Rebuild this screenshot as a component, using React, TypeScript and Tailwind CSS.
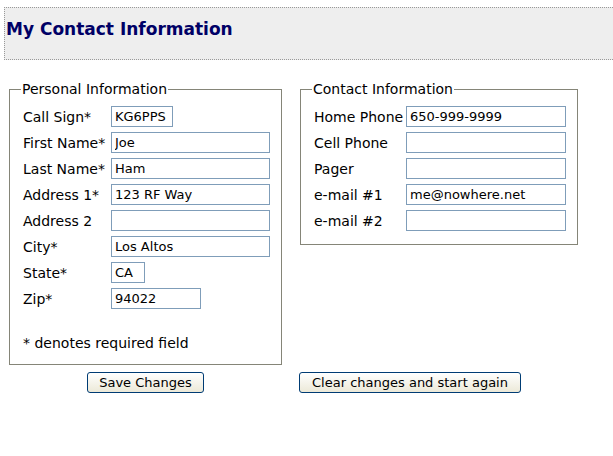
import React from "react";

const font = { fontFamily: '"DejaVu Sans", Verdana, sans-serif' };

function Row({ label, value, w, labelW }: { label: string; value: string; w: string; labelW: string }) {
  return (
    <div className="flex items-center h-[21px]">
      <div className={`${labelW} shrink-0 text-[14px] text-black leading-none whitespace-nowrap`}>{label}</div>
      <input
        readOnly
        value={value}
        className={`${w} h-[21px] border border-[#7f9db9] bg-white px-[3px] text-[13px] text-black outline-none`}
        style={font}
      />
    </div>
  );
}

export default function App() {
  return (
    <div className="w-[613px] h-[456px] bg-white overflow-hidden" style={font}>
      <div className="mt-[7px] ml-[4px] h-[53px] border-t border-b border-l border-dotted border-[#999] bg-[#eeeeee] flex items-center pl-[1px]">
        <h1 className="text-[17px] font-bold text-[#000066] leading-none -mt-[8px]">My Contact Information</h1>
      </div>
      <div className="flex mt-[22px] ml-[9px] gap-[18px] items-start">
        <fieldset className="w-[273px] border border-[#858578] pl-[13px] pr-[11px] pt-[10px] pb-[14px]">
          <legend className="text-[14px] px-[1px] -ml-[2px] text-black leading-none">Personal Information</legend>
          <div className="flex flex-col gap-[5px]">
            <Row label="Call Sign*" value="KG6PPS" w="w-[62px]" labelW="w-[88px]" />
            <Row label="First Name*" value="Joe" w="w-[159px]" labelW="w-[88px]" />
            <Row label="Last Name*" value="Ham" w="w-[159px]" labelW="w-[88px]" />
            <Row label="Address 1*" value="123 RF Way" w="w-[159px]" labelW="w-[88px]" />
            <Row label="Address 2" value="" w="w-[159px]" labelW="w-[88px]" />
            <Row label="City*" value="Los Altos" w="w-[159px]" labelW="w-[88px]" />
            <Row label="State*" value="CA" w="w-[34px]" labelW="w-[88px]" />
            <Row label="Zip*" value="94022" w="w-[90px]" labelW="w-[88px]" />
          </div>
          <div className="mt-[27px] text-[14px] leading-none text-black">* denotes required field</div>
        </fieldset>
        <fieldset className="w-[277px] border border-[#858578] pl-[13px] pr-[11px] pt-[10px] pb-[13px]">
          <legend className="text-[14px] px-[1px] -ml-[2px] text-black leading-none">Contact Information</legend>
          <div className="flex flex-col gap-[5px]">
            <Row label="Home Phone" value="650-999-9999" w="w-[160px]" labelW="w-[92px]" />
            <Row label="Cell Phone" value="" w="w-[160px]" labelW="w-[92px]" />
            <Row label="Pager" value="" w="w-[160px]" labelW="w-[92px]" />
            <Row label="e-mail #1" value="me@nowhere.net" w="w-[160px]" labelW="w-[92px]" />
            <Row label="e-mail #2" value="" w="w-[160px]" labelW="w-[92px]" />
          </div>
        </fieldset>
      </div>
      <div className="flex items-start mt-[7px] ml-[9px]">
        <div className="w-[273px] flex justify-center">
          <button className="w-[117px] h-[21px] rounded-[3px] border border-[#003c74] bg-gradient-to-b from-white to-[#ece9d8] text-[13px] text-black leading-none" style={font}>
            Save Changes
          </button>
        </div>
        <div className="ml-[17px] flex">
          <button className="w-[222px] h-[21px] rounded-[3px] border border-[#003c74] bg-gradient-to-b from-white to-[#ece9d8] text-[13px] text-black leading-none" style={font}>
            Clear changes and start again
          </button>
        </div>
      </div>
    </div>
  );
}
